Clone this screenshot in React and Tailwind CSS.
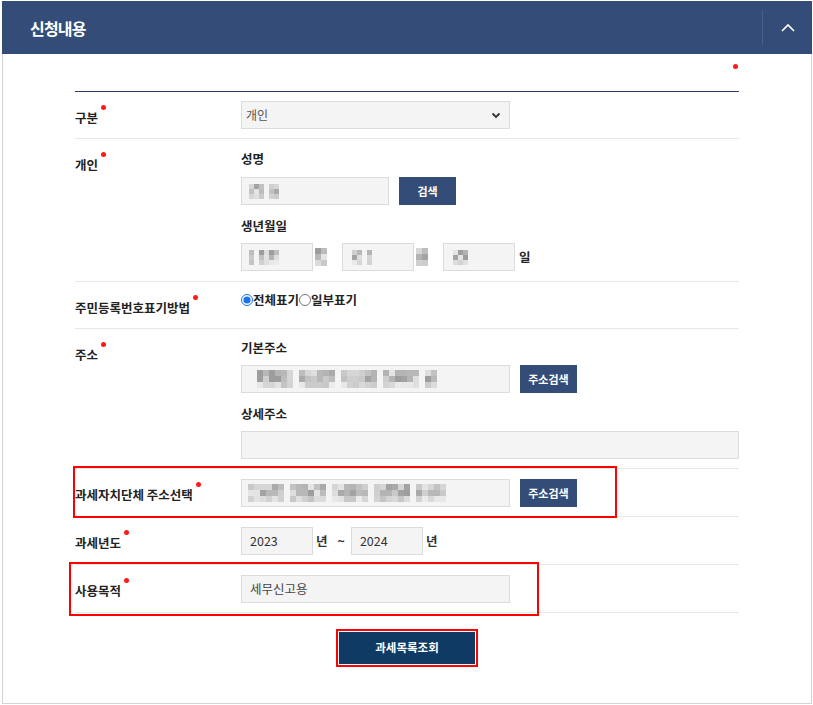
import React from "react";

const shades = ["#c9c9c9", "#b4b4b4", "#a3a3a3", "#d6d6d6", "#bdbdbd", "#e4e4e4", "#9d9d9d", "#cfcfcf", "#aaaaaa", "#dedede", "#b8b8b8", "#c2c2c2"];

function Mosaic({ cols, rows = 3, seed = 1, cell = 6 }) {
  const cells = [];
  let s = seed;
  for (let r = 0; r < rows; r++) {
    const row = [];
    for (let c = 0; c < cols; c++) {
      s = (s * 9301 + 49297) % 233280;
      const idx = Math.floor((s / 233280) * shades.length);
      const gap = (c + seed) % 7 === 6;
      row.push(
        <span
          key={c}
          className="block"
          style={{ width: cell, height: cell, background: gap ? "transparent" : shades[idx], opacity: r === rows - 1 ? 0.55 : 1 }}
        />
      );
    }
    cells.push(
      <div key={r} className="flex">
        {row}
      </div>
    );
  }
  return <div className="flex flex-col">{cells}</div>;
}

function Label({ children }) {
  return (
    <div className="w-[166px] shrink-0 pt-[12px]">
      <span className="relative inline-block text-[12.5px] leading-[16px] font-bold text-[#222]">
        {children}
        <span className="absolute left-[calc(100%+3px)] top-[-5px] h-[5px] w-[5px] rounded-full bg-[#ff1a1a]" />
      </span>
    </div>
  );
}

function Input({ className = "", children }) {
  return (
    <div className={"h-[28px] bg-[#f4f4f4] border border-[#dcdcdc] flex items-center " + className}>
      {children}
    </div>
  );
}

function Btn({ children, className = "" }) {
  return (
    <div className={"h-[28px] w-[57px] bg-[#344d78] text-white text-[11px] font-bold flex items-center justify-center " + className}>
      {children}
    </div>
  );
}

function Sub({ children, className = "" }) {
  return <div className={"text-[12.5px] leading-[20px] font-bold text-[#222] " + className}>{children}</div>;
}

export default function App() {
  return (
    <div className="w-[813px] h-[705px] bg-white pt-[1px] font-['Noto_Sans_CJK_KR',sans-serif]">
      <div className="ml-[2px] w-[810px]">
        {/* header */}
        <div className="h-[53px] bg-[#344d78] flex items-center justify-between pl-[28px]">
          <div className="text-white text-[16px] font-bold tracking-[-0.8px]">신청내용</div>
          <div className="h-[35px] w-[50px] border-l border-[#4a5e86] flex items-center justify-center">
            <svg width="14" height="9" viewBox="0 0 14 9" fill="none">
              <path d="M1 8 L7 2 L13 8" stroke="#ffffff" strokeWidth="1.6" />
            </svg>
          </div>
        </div>

        {/* body */}
        <div className="h-[650px] border-x border-b border-[#d4d4d4] px-[72px]">
          <div className="relative h-[37px]">
            <span className="absolute right-[1px] top-[10px] h-[5px] w-[5px] rounded-full bg-[#ff1a1a]" />
          </div>
          <div className="h-px bg-[#2c3c61]" />

          {/* 구분 */}
          <div className="flex border-b border-[#e8e8e8]">
            <Label>구분</Label>
            <div className="py-[9px]">
              <Input className="w-[269px] justify-between pl-[4px] pr-[8px]">
                <span className="text-[12px] text-[#555]">개인</span>
                <svg width="10" height="7" viewBox="0 0 10 7" fill="none">
                  <path d="M1.5 1.5 L5 5 L8.5 1.5" stroke="#333" strokeWidth="1.8" />
                </svg>
              </Input>
            </div>
          </div>

          {/* 개인 */}
          <div className="flex border-b border-[#e8e8e8]">
            <Label>개인</Label>
            <div className="pt-[10px] pb-[10px]">
              <Sub className="mb-[8px]">성명</Sub>
              <div className="flex gap-[10px]">
                <Input className="w-[148px] pl-[7px]">
                  <Mosaic cols={6} rows={3} seed={3} cell={5} />
                </Input>
                <Btn>검색</Btn>
              </div>
              <Sub className="mt-[11px] mb-[7px]">생년월일</Sub>
              <div className="flex items-center">
                <Input className="w-[72px] pl-[7px]">
                  <Mosaic cols={6} rows={3} seed={5} cell={5} />
                </Input>
                <div className="w-[29px] pl-[2px]">
                  <Mosaic cols={2} rows={3} seed={8} cell={6} />
                </div>
                <Input className="w-[72px] pl-[9px]">
                  <Mosaic cols={4} rows={3} seed={11} cell={5} />
                </Input>
                <div className="w-[29px] pl-[2px]">
                  <Mosaic cols={2} rows={3} seed={2} cell={6} />
                </div>
                <Input className="w-[72px] pl-[9px]">
                  <Mosaic cols={3} rows={3} seed={7} cell={5} />
                </Input>
                <span className="ml-[4px] text-[12.5px] font-bold text-[#222]">일</span>
              </div>
            </div>
          </div>

          {/* 주민등록번호표기방법 */}
          <div className="flex border-b border-[#e8e8e8] min-h-[47px]">
            <Label>주민등록번호표기방법</Label>
            <div className="pt-[10px] flex items-center h-[26px] self-start text-[12.5px] font-bold text-[#222]">
              <label className="flex items-center">
                <input type="radio" name="rrn" defaultChecked className="m-0 h-[12px] w-[12px] accent-[#1a73e8]" />
                <span>전체표기</span>
              </label>
              <label className="flex items-center">
                <input type="radio" name="rrn" className="m-0 h-[12px] w-[12px]" />
                <span>일부표기</span>
              </label>
            </div>
          </div>

          {/* 주소 */}
          <div className="flex border-b border-[#e8e8e8]">
            <Label>주소</Label>
            <div className="flex-1 pt-[9px] pb-[9px]">
              <Sub className="mb-[7px]">기본주소</Sub>
              <div className="flex gap-[10px]">
                <Input className="w-[269px] pl-[9px]">
                  <Mosaic cols={31} rows={3} seed={13} cell={6} />
                </Input>
                <Btn>주소검색</Btn>
              </div>
              <Sub className="mt-[11px] mb-[7px]">상세주소</Sub>
              <Input className="w-full" />
            </div>
          </div>

          {/* 과세자치단체 주소선택 */}
          <div className="relative flex border-b border-[#e8e8e8]">
            <Label>과세자치단체 주소선택</Label>
            <div className="pt-[10px] pb-[9px] flex gap-[10px]">
              <Input className="w-[269px] pl-[6px]">
                <Mosaic cols={33} rows={3} seed={21} cell={6} />
              </Input>
              <Btn>주소검색</Btn>
            </div>
            <div className="absolute left-[-2px] top-[-3px] w-[544px] h-[52px] border-2 border-[#ff0000]" />
          </div>

          {/* 과세년도 */}
          <div className="flex border-b border-[#e8e8e8]">
            <Label>과세년도</Label>
            <div className="pt-[10px] pb-[9px] flex items-center text-[12.5px] text-[#333]">
              <Input className="w-[72px] pl-[8px]">2023</Input>
              <span className="ml-[3px] font-bold">년</span>
              <span className="ml-[10px] font-bold">~</span>
              <Input className="ml-[6px] w-[72px] pl-[8px]">2024</Input>
              <span className="ml-[3px] font-bold">년</span>
            </div>
          </div>

          {/* 사용목적 */}
          <div className="relative flex border-b border-[#e8e8e8]">
            <Label>사용목적</Label>
            <div className="pt-[10px] pb-[9px]">
              <Input className="w-[269px] pl-[8px] text-[12.5px] text-[#444]">세무신고용</Input>
            </div>
            <div className="absolute left-[-6px] top-[-3px] w-[470px] h-[54px] border-2 border-[#ff0000]" />
          </div>

          <div className="flex justify-center pt-[16px]">
            <div className="border-2 border-[#ff0000] p-px">
              <div className="h-[32px] w-[136px] bg-[#0f3a63] text-white text-[11.5px] font-bold flex items-center justify-center">
                과세목록조회
              </div>
            </div>
          </div>
        </div>
      </div>
    </div>
  );
}
